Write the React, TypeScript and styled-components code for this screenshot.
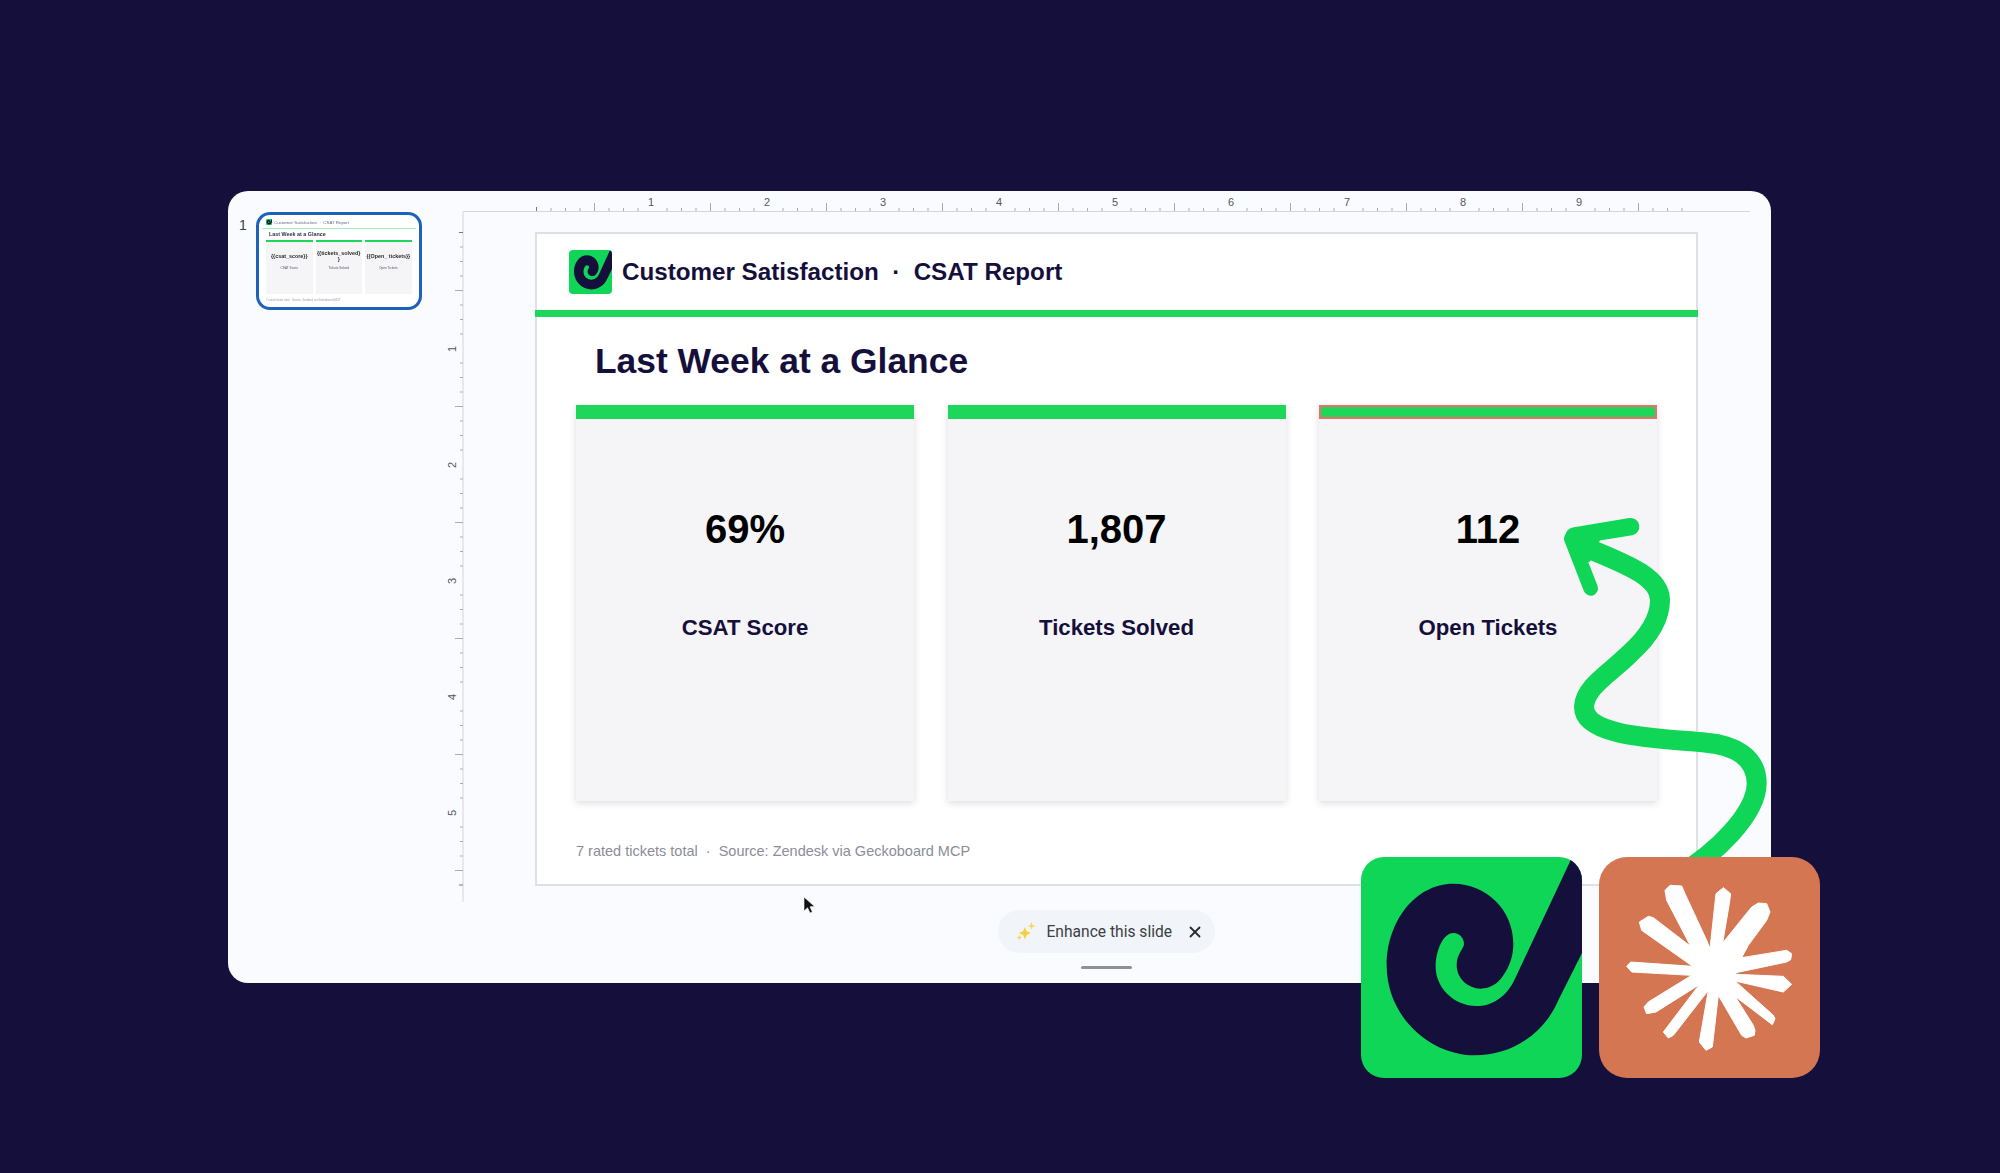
import React from 'react';
import styled, { createGlobalStyle } from 'styled-components';
import { X } from 'lucide-react';

const NAVY = '#15103b';
const GREEN = '#10d657';
const BAR_GREEN = '#1dd65a';
const INCH = 116;

const GlobalStyle = createGlobalStyle`
  html, body {
    margin: 0;
    padding: 0;
    background: ${NAVY};
  }
  * { box-sizing: border-box; }
`;

const Page = styled.div`
  position: relative;
  width: 2000px;
  height: 1173px;
  padding: 191px 229px 0 228px;
  background: ${NAVY};
  overflow: hidden;
  font-family: 'Liberation Sans', Arial, sans-serif;
`;

const Window = styled.div`
  display: flex;
  width: 1543px;
  height: 792px;
  background: #fafbff;
  border-radius: 20px;
  overflow: hidden;
`;

/* filmstrip */
const Filmstrip = styled.div`
  display: flex;
  align-items: flex-start;
  gap: 9px;
  width: 205px;
  padding: 21px 0 0 11px;
  flex-shrink: 0;
`;

const SlideNumber = styled.span`
  font-size: 14px;
  line-height: 16px;
  color: #3c4043;
  margin-top: 5px;
  width: 8px;
`;

const Thumb = styled.div`
  display: flex;
  flex-direction: column;
  width: 166px;
  height: 98px;
  background: #fff;
  border: 3px solid #1b62b8;
  border-radius: 14px;
  overflow: hidden;
  color: #33314f;
  filter: blur(0.35px);
`;

const ThumbHeader = styled.div`
  display: flex;
  align-items: center;
  gap: 2px;
  height: 13px;
  padding: 1px 0 0 7px;
  font-size: 4.4px;
  white-space: pre;
  color: #6d6b82;
`;

const ThumbRule = styled.div`
  height: 1px;
  margin: 0 3px;
  background: #a4ecbc;
`;

const ThumbTitle = styled.div`
  padding: 2px 0 0 10px;
  height: 11px;
  font-size: 5.4px;
  font-weight: bold;
  color: #33314f;
`;

const ThumbCards = styled.div`
  display: flex;
  gap: 3px;
  padding-left: 7px;
`;

const ThumbCard = styled.div`
  display: flex;
  flex-direction: column;
  align-items: center;
  width: 46.5px;
  height: 54px;
  background: #f5f5f7;
  border-top: 2px solid ${BAR_GREEN};
  color: #2b2b2b;
`;

const ThumbValue = styled.div`
  height: 16px;
  margin-top: 6px;
  width: 100%;
  font-size: 5.4px;
  line-height: 6px;
  font-weight: bold;
  text-align: center;
  white-space: pre;
  display: flex;
  align-items: center;
  justify-content: center;
`;

const ThumbLabel = styled.div`
  font-size: 3.2px;
  margin-top: 2px;
  color: #55536a;
`;

const ThumbFooter = styled.div`
  padding: 4px 0 0 7px;
  font-size: 2.8px;
  color: #9a9aa6;
`;

/* editor */
const Editor = styled.div`
  display: flex;
  flex-direction: column;
  flex: 1;
  min-width: 0;
`;

const TopRuler = styled.svg`
  display: block;
  flex-shrink: 0;
  margin-left: 30px;
`;

const Canvas = styled.div`
  display: flex;
  align-items: flex-start;
  height: 690px;
`;

const LeftRuler = styled.svg`
  display: block;
  flex-shrink: 0;
`;

const Slide = styled.div`
  display: flex;
  flex-direction: column;
  width: 1163px;
  height: 654px;
  margin: 20px 0 0 71px;
  background: #fff;
  border: 2px solid #dfe0e3;
`;

const SlideHeader = styled.div`
  display: flex;
  align-items: center;
  gap: 10px;
  height: 76px;
  padding: 0 0 0 32px;
  font-size: 24.2px;
  font-weight: bold;
  color: ${NAVY};
  white-space: pre;
`;

const HeaderRule = styled.div`
  height: 7px;
  margin: 0 -2px;
  background: ${BAR_GREEN};
  flex-shrink: 0;
`;

const SlideTitle = styled.h1`
  margin: 0;
  height: 88px;
  padding: 24px 0 0 58px;
  font-size: 35.4px;
  line-height: 40px;
  font-weight: bold;
  color: ${NAVY};
`;

const Cards = styled.div`
  display: flex;
  gap: 33.5px;
  padding-left: 39px;
`;

const Card = styled.div`
  display: flex;
  flex-direction: column;
  align-items: center;
  width: 338px;
  height: 396px;
  background: #f5f5f7;
  box-shadow: 0 2px 7px rgba(40, 40, 60, 0.16);
`;

const CardBar = styled.div<{ $selected?: boolean }>`
  align-self: stretch;
  height: 14px;
  background: ${BAR_GREEN};
  border: ${(p) => (p.$selected ? '2px solid #e8726a' : 'none')};
`;

const CardValue = styled.div`
  margin-top: 86px;
  font-size: 40px;
  line-height: 48px;
  font-weight: bold;
  color: #000;
`;

const CardLabel = styled.div`
  margin-top: 62px;
  font-size: 22.2px;
  line-height: 26px;
  font-weight: bold;
  color: ${NAVY};
`;

const SlideFooter = styled.div`
  padding: 41px 0 0 39px;
  font-size: 14.5px;
  line-height: 18px;
  color: #8b8d98;
  white-space: pre;
`;

const BottomBar = styled.div`
  display: flex;
  flex-direction: column;
  align-items: center;
  padding-right: 2px;
  margin-top: 8px;
  margin-left: 10px;
`;

const EnhancePill = styled.div`
  display: flex;
  align-items: center;
  width: 217px;
  height: 43px;
  padding: 0 0 0 18px;
  background: #f1f4f8;
  border-radius: 22px;
  font-family: Roboto, 'Liberation Sans', sans-serif;
  font-size: 15.6px;
  font-weight: 400;
  color: #3c4043;
`;

const PillText = styled.span`
  margin: 0 14px 0 11px;
  white-space: nowrap;
`;

const Handle = styled.div`
  width: 51px;
  height: 3px;
  margin-top: 13px;
  background: #8f9094;
  border-radius: 2px;
`;

/* things that lie over the window */
const Arrow = styled.svg`
  position: absolute;
  left: 1500px;
  top: 490px;
`;

const Cursor = styled.svg`
  position: absolute;
  left: 803px;
  top: 896px;
`;

const AppIcons = styled.div`
  position: absolute;
  left: 1361px;
  top: 857px;
  display: flex;
  gap: 17px;
`;

const AppIcon = styled.div<{ $bg: string; $radius: number }>`
  width: 221px;
  height: 221px;
  background: ${(p) => p.$bg};
  border-radius: ${(p) => p.$radius}px;
  overflow: hidden;
`;

const LogoBox = styled.div<{ $w: number; $h: number; $radius: number }>`
  width: ${(p) => p.$w}px;
  height: ${(p) => p.$h}px;
  flex-shrink: 0;
  background: ${GREEN};
  border-radius: ${(p) => p.$radius}px;
  overflow: hidden;
`;

const LogoSvg = styled.svg`
  display: block;
  width: 100%;
  height: 100%;
`;

const SwirlMark = () => (
  <LogoSvg viewBox="63 50 663 663" preserveAspectRatio="none">
    <path
      fill={NAVY}
      d="M687 70 L525 415 C500 470 455 497 410 497 C340 497 287 440 287 380 C287 330 310 278 340 278 C360 278 372 295 372 310 C372 325 350 340 350 375 C350 415 385 445 422 445 C450 445 475 430 490 405 C510 375 520 345 520 310 C520 210 440 130 340 130 C225 130 140 245 140 375 C140 530 270 645 405 645 C510 645 610 585 655 480 L725 340 L740 310 L740 40 L700 40 Z"
    />
  </LogoSvg>
);

const StarMark = () => (
  <LogoSvg viewBox="777 50 663 663">
    <polygon
      fill="#fff"
      stroke="#fff"
      strokeWidth="3"
      strokeLinejoin="round"
      points="975,150 990,135 1025,137 1035,160 1100,300 1110,325 1128,160 1150,142 1172,160 1168,190 1148,308 1235,200 1255,188 1280,190 1290,215 1280,240 1225,315 1205,352 1340,330 1355,340 1352,358 1340,365 1188,397 1188,402 1330,408 1355,432 1330,455 1185,422 1300,525 1305,535 1297,553 1185,468 1240,555 1245,570 1243,585 1218,593 1205,585 1135,465 1117,620 1098,630 1078,605 1105,450 1000,585 985,593 970,575 1078,433 948,515 920,520 912,500 925,485 1055,405 875,395 860,378 872,365 1058,378 905,270 898,245 925,228 940,232 1052,318 980,180"
    />
  </LogoSvg>
);

const Sparkles = () => (
  <svg width="20" height="20" viewBox="0 0 18 18">
    <path fill="#f7cf3c" d="M8 4.5 L9.6 8.4 L13.5 10 L9.6 11.6 L8 15.5 L6.4 11.6 L2.5 10 L6.4 8.4 Z" />
    <path fill="#f9d65a" d="M14 0 L14.9 2.6 L17.5 3.5 L14.9 4.4 L14 7 L13.1 4.4 L10.5 3.5 L13.1 2.6 Z" />
    <path fill="#f9d65a" d="M3 11.5 L3.7 13.3 L5.5 14 L3.7 14.7 L3 16.5 L2.3 14.7 L0.5 14 L2.3 13.3 Z" />
  </svg>
);

const tickLen = (i: number) => {
  if (i % 8 === 0) return i === 0 ? 4 : 0;
  if (i % 4 === 0) return 8;
  return 3;
};

const HorizontalRuler = () => {
  const ticks = Array.from({ length: 80 }, (_, i) => i);
  return (
    <TopRuler width={1287} height={21}>
      <line x1="0" y1="20.5" x2="1287" y2="20.5" stroke="#d5d6da" />
      {ticks.map((i) => {
        const x = 73.5 + (i * INCH) / 8;
        return <line key={i} x1={x} x2={x} y1={20} y2={20 - tickLen(i)} stroke={i === 0 ? '#77787d' : '#a9abb0'} />;
      })}
      {[1, 2, 3, 4, 5, 6, 7, 8, 9].map((n) => (
        <text key={n} x={72 + n * INCH} y={15} fontSize="11" textAnchor="middle" fill="#55565c" fontFamily="Liberation Sans, sans-serif">
          {n}
        </text>
      ))}
    </TopRuler>
  );
};

const VerticalRuler = () => {
  const ticks = Array.from({ length: 46 }, (_, i) => i);
  return (
    <LeftRuler width={31} height={690}>
      <line x1="30" y1="0" x2="30" y2="690" stroke="#d5d6da" />
      {ticks.map((i) => {
        const y = 20.5 + (i * INCH) / 8;
        const dark = i === 0 || i === 45;
        return <line key={i} x1={30} x2={30 - (dark ? 4 : tickLen(i))} y1={y} y2={y} stroke={dark ? '#77787d' : '#a9abb0'} />;
      })}
      {[1, 2, 3, 4, 5].map((n) => (
        <text
          key={n}
          x={0}
          y={0}
          fontSize="11"
          textAnchor="middle"
          fill="#55565c"
          fontFamily="Liberation Sans, sans-serif"
          transform={`translate(23 ${21 + n * INCH}) rotate(-90)`}
        >
          {n}
        </text>
      ))}
    </LeftRuler>
  );
};

const metrics = [
  { value: '69%', label: 'CSAT Score', thumb: '{{csat_score}}', thumbLabel: 'CSAT Score' },
  { value: '1,807', label: 'Tickets Solved', thumb: '{{tickets_solved}\n}', thumbLabel: 'Tickets Solved' },
  { value: '112', label: 'Open Tickets', thumb: '{{Open_ tickets}}', thumbLabel: 'Open Tickets', selected: true },
];

const App: React.FC = () => {
  return (
    <Page>
      <GlobalStyle />
      <Window>
        <Filmstrip>
          <SlideNumber>1</SlideNumber>
          <Thumb>
            <ThumbHeader>
              <LogoBox $w={6} $h={6} $radius={1}>
                <SwirlMark />
              </LogoBox>
              {'Customer Satisfaction  ·  CSAT Report'}
            </ThumbHeader>
            <ThumbRule />
            <ThumbTitle>Last Week at a Glance</ThumbTitle>
            <ThumbCards>
              {metrics.map((m) => (
                <ThumbCard key={m.label}>
                  <ThumbValue>{m.thumb}</ThumbValue>
                  <ThumbLabel>{m.thumbLabel}</ThumbLabel>
                </ThumbCard>
              ))}
            </ThumbCards>
            <ThumbFooter>7 rated tickets total · Source: Zendesk via Geckoboard MCP</ThumbFooter>
          </Thumb>
        </Filmstrip>
        <Editor>
          <HorizontalRuler />
          <Canvas>
            <VerticalRuler />
            <Slide>
              <SlideHeader>
                <LogoBox $w={43} $h={44} $radius={4}>
                  <SwirlMark />
                </LogoBox>
                {'Customer Satisfaction  ·  CSAT Report'}
              </SlideHeader>
              <HeaderRule />
              <SlideTitle>Last Week at a Glance</SlideTitle>
              <Cards>
                {metrics.map((m) => (
                  <Card key={m.label}>
                    <CardBar $selected={m.selected} />
                    <CardValue>{m.value}</CardValue>
                    <CardLabel>{m.label}</CardLabel>
                  </Card>
                ))}
              </Cards>
              <SlideFooter>{'7 rated tickets total  ·  Source: Zendesk via Geckoboard MCP'}</SlideFooter>
            </Slide>
          </Canvas>
          <BottomBar>
            <EnhancePill>
              <Sparkles />
              <PillText>Enhance this slide</PillText>
              <X size={18} color="#2b2c30" strokeWidth={2.4} />
            </EnhancePill>
            <Handle />
          </BottomBar>
        </Editor>
      </Window>

      <Cursor width="16" height="20" viewBox="0 0 16 20">
        <path d="M1 1 L1 15 L4.6 11.8 L7 17 L9.4 16 L7 10.8 L11.6 10.6 Z" fill="#111" stroke="#fff" strokeWidth="0.6" />
      </Cursor>

      <Arrow width="300" height="400" viewBox="0 0 900 1200" fill="none" stroke={GREEN} strokeLinecap="round" strokeLinejoin="round">
        <path
          strokeWidth="60"
          d="M530 1160 C650 1090 770 970 770 880 C770 800 700 765 620 758 C500 745 250 745 252 650 C255 590 330 550 390 490 C440 445 480 390 480 330 C480 250 340 210 230 160"
        />
        <path strokeWidth="52" d="M392 110 L222 138" />
        <path strokeWidth="44" d="M214 146 L272 295" />
        <path fill={GREEN} stroke="none" d="M200 130 L300 150 L270 215 L225 220 Z" />
      </Arrow>

      <AppIcons>
        <AppIcon $bg={GREEN} $radius={23}>
          <SwirlMark />
        </AppIcon>
        <AppIcon $bg="#d57652" $radius={28}>
          <StarMark />
        </AppIcon>
      </AppIcons>
    </Page>
  );
};

export default App;
